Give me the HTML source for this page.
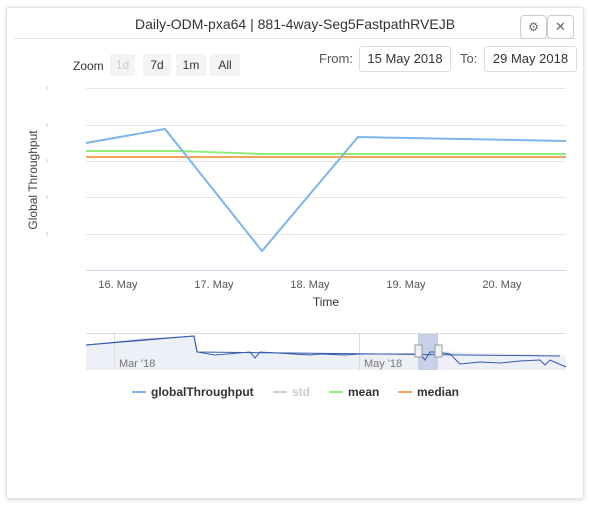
<!DOCTYPE html>
<html><head><style>
body{margin:0;background:#fff;font-family:"Liberation Sans",sans-serif;}
.card{position:absolute;left:6px;top:7px;width:576px;height:490px;border:1px solid #e2e2e2;border-radius:3px;box-shadow:0 1px 4px rgba(0,0,0,.15);}
.title{position:absolute;left:0;width:590px;top:16px;text-align:center;font-size:14px;color:#333;}
.btn{position:absolute;border:1px solid #ccc;border-radius:4px;background:#fff;}
.db{position:absolute;border:1px solid #ddd;border-radius:3px;height:24px;line-height:24px;font-size:13px;color:#333;text-align:center;}
.z{position:absolute;top:54px;height:22px;line-height:22px;font-size:12px;background:#f4f4f4;border-radius:2px;text-align:center;color:#333}
</style></head><body>
<div class="card"></div>
<div class="title">Daily-ODM-pxa64 | 881-4way-Seg5FastpathRVEJB</div>
<div style="position:absolute;left:14px;top:38px;width:562px;height:1px;background:#e5e8ef"></div>
<div class="btn" style="left:520px;top:15px;width:25px;height:22px;font-size:12px;text-align:center;line-height:22px;color:#666">⚙</div>
<div class="btn" style="left:547px;top:15px;width:25px;height:22px;font-size:13px;text-align:center;line-height:22px;color:#666">✕</div>
<div style="position:absolute;left:73px;top:59px;font-size:12px;color:#333">Zoom</div>
<div class="z" style="left:110px;width:25px;color:#ccc">1d</div>
<div class="z" style="left:143px;width:28px">7d</div>
<div class="z" style="left:176px;width:30px">1m</div>
<div class="z" style="left:210px;width:30px">All</div>
<div style="position:absolute;left:319px;top:51px;font-size:13px;color:#555">From:</div>
<div class="db" style="left:359px;top:46px;width:90px">15 May 2018</div>
<div style="position:absolute;left:460px;top:51px;font-size:13px;color:#555">To:</div>
<div class="db" style="left:484px;top:46px;width:91px">29 May 2018</div>
<svg width="590" height="508" style="position:absolute;left:0;top:0" font-family="Liberation Sans">
<g stroke="#e6e6e6"><line x1="86" x2="566" y1="88.5" y2="88.5"/><line x1="86" x2="566" y1="125.5" y2="125.5"/><line x1="86" x2="566" y1="161.5" y2="161.5"/><line x1="86" x2="566" y1="197.5" y2="197.5"/><line x1="86" x2="566" y1="234.5" y2="234.5"/></g>
<line x1="86" x2="566" y1="270.5" y2="270.5" stroke="#ccd6eb"/>
<g stroke="#ccc"><line x1="47" x2="47" y1="86" y2="90"/><line x1="47" x2="47" y1="123" y2="127"/><line x1="47" x2="47" y1="159" y2="163"/><line x1="47" x2="47" y1="195" y2="199"/><line x1="47" x2="47" y1="232" y2="236"/></g>
<text transform="translate(37,180) rotate(-90)" text-anchor="middle" font-size="12" fill="#444">Global Throughput</text>
<g font-size="11" fill="#555" text-anchor="middle"><text x="118" y="288">16. May</text><text x="214" y="288">17. May</text><text x="310" y="288">18. May</text><text x="406" y="288">19. May</text><text x="502" y="288">20. May</text></g>
<text x="326" y="306" font-size="12" fill="#333" text-anchor="middle">Time</text>
<polyline points="86,157 566,157" fill="none" stroke="#f7a35c" stroke-width="2"/>
<polyline points="86,151 180,151 262,154 566,154" fill="none" stroke="#90ed7d" stroke-width="2"/>
<polyline points="86,143 165,129 262,251 358,137 566,141" fill="none" stroke="#7cb5ec" stroke-width="2"/>
<line x1="86" x2="566" y1="333.5" y2="333.5" stroke="#ddd"/>
<path d="M86,345 L140,338 L194,336 L197,352 L215,355 L250,352 L310,353 L360,354 L420,354 L440,351 L460,352 L480,353 L500,353 L566,355 L566,370 L86,370Z" fill="#eef0f8"/>
<line x1="114.5" x2="114.5" y1="334" y2="370" stroke="#ddd"/><line x1="359.5" x2="359.5" y1="334" y2="370" stroke="#ddd"/>
<rect x="418" y="334" width="20" height="36" fill="#c7d1e8"/>
<polyline points="86,345 140,340 194,336 197,352 215,355 250,352 255,358 260,352 310,355 320,354 345,355 360,354 420,354 425,360 430,352 437,352 450,354 460,364 480,362 500,363 520,361 540,360 545,365 550,360 566,367" fill="none" stroke="#335cad" stroke-width="1"/>
<polyline points="86,345 194,336 197,352 560,356" fill="none" stroke="#335cad" stroke-width="1"/>
<rect x="415" y="345" width="7" height="12" fill="#f2f2f2" stroke="#999"/><rect x="435" y="345" width="7" height="12" fill="#f2f2f2" stroke="#999"/>
<g font-size="11" fill="#777"><text x="119" y="367">Mar '18</text><text x="364" y="367">May '18</text></g>
<g font-size="12" font-weight="bold"><line x1="132" x2="146" y1="392" y2="392" stroke="#7cb5ec" stroke-width="2"/><text x="151" y="396" fill="#333">globalThroughput</text>
<line x1="273" x2="287" y1="392" y2="392" stroke="#ccc" stroke-width="2"/><text x="292" y="396" fill="#ccc">std</text>
<line x1="329" x2="343" y1="392" y2="392" stroke="#90ed7d" stroke-width="2"/><text x="348" y="396" fill="#333">mean</text>
<line x1="398" x2="412" y1="392" y2="392" stroke="#f7a35c" stroke-width="2"/><text x="417" y="396" fill="#333">median</text></g>
</svg>
</body></html>
